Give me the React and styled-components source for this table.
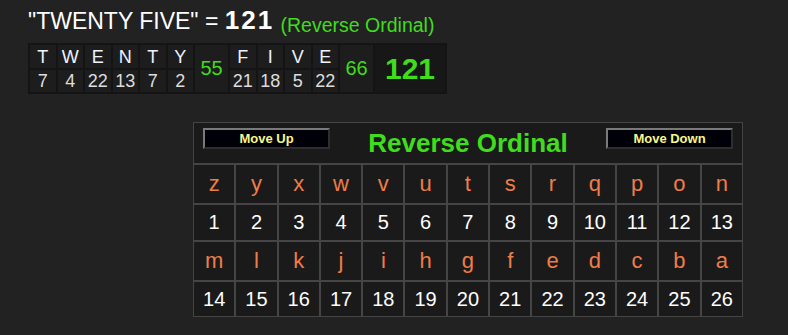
import React from 'react';
import styled, { createGlobalStyle } from 'styled-components';

const GREEN = '#40dc1e';

const GlobalStyle = createGlobalStyle`
  html, body { margin: 0; padding: 0; background: #222222; }
  body { font-family: "Liberation Sans", Arial, Helvetica, sans-serif; }
`;

const Page = styled.div`
  padding: 5px 0 0 28px;
  min-height: 335px;
  box-sizing: border-box;
`;

const Title = styled.div`
  font-size: 23px;
  line-height: 30px;
  color: #ffffff;
  white-space: nowrap;
  margin-bottom: 3px;
`;

const TitleValue = styled.b`
  font-size: 26px;
  letter-spacing: 2px;
`;

const TitleCipher = styled.span`
  color: ${GREEN};
  font-size: 19.5px;
  vertical-align: -3px;
`;

const Breakdown = styled.table`
  border-collapse: separate;
  border-spacing: 2px;
  background: #141414;
  table-layout: fixed;
  width: 419px;
`;

const BreakRow = styled.tr`
  height: ${p => p.$h}px;
`;

const LetterCell = styled.td`
  width: 25.5px;
  padding: 0;
  background: #1d1d1d;
  color: ${p => (p.$num ? '#dddddd' : '#eef4ff')};
  text-align: center;
  font-size: 18px;
  line-height: 1;
`;

const WordTotal = styled.td`
  width: 33px;
  padding: 0;
  background: #1d1d1d;
  color: ${GREEN};
  text-align: center;
  font-size: 20px;
`;

const GrandTotal = styled.td`
  width: 70px;
  padding: 0;
  background: #171717;
  color: ${GREEN};
  text-align: center;
  font-size: 30px;
  font-weight: bold;
`;

const Chart = styled.table`
  margin: 28px 0 0 165px;
  border-collapse: separate;
  border-spacing: 0;
  width: 550px;
  table-layout: fixed;
  background: #1a1a1a;
`;

const ChartRow = styled.tr`
  height: ${p => p.$h}px;
`;

const HeaderCell = styled.td`
  border: 1px solid #454545;
  padding: 5px 9px 0;
  vertical-align: top;
`;

const HeaderBar = styled.div`
  display: flex;
  justify-content: space-between;
  align-items: flex-start;
`;

const MoveButton = styled.button`
  width: 127px;
  height: 21px;
  box-sizing: border-box;
  background: #000008;
  border: 2px solid;
  border-color: #7a7a7a #2e2e2e #2e2e2e #7a7a7a;
  color: #f8f88a;
  font: bold 13px "Liberation Sans", Arial, sans-serif;
  padding: 0;
  line-height: 16px;
  cursor: pointer;
`;

const ChartTitle = styled.div`
  color: ${GREEN};
  font-size: 26px;
  font-weight: bold;
  line-height: 30px;
`;

const Cell = styled.td`
  border: 1px solid #454545;
  text-align: center;
  vertical-align: middle;
  padding: 0;
  color: ${p => (p.$letter ? '#ef7d48' : '#ffffff')};
  font-size: ${p => (p.$letter ? 22 : 20)}px;
`;

const word1 = [['T', 7], ['W', 4], ['E', 22], ['N', 13], ['T', 7], ['Y', 2]];
const word2 = [['F', 21], ['I', 18], ['V', 5], ['E', 22]];

const alphabet = 'zyxwvutsrqponmlkjihgfedcba'.split('');
const rows = [alphabet.slice(0, 13), alphabet.slice(13)];

export default function App() {
  return (
    <>
      <GlobalStyle />
      <Page>
        <Title>
          "TWENTY FIVE" = <TitleValue>121</TitleValue> <TitleCipher>(Reverse Ordinal)</TitleCipher>
        </Title>
        <Breakdown>
          <tbody>
            <BreakRow $h={23}>
              {word1.map(([l], i) => (
                <LetterCell key={'a' + i}>{l}</LetterCell>
              ))}
              <WordTotal rowSpan={2}>55</WordTotal>
              {word2.map(([l], i) => (
                <LetterCell key={'b' + i}>{l}</LetterCell>
              ))}
              <WordTotal rowSpan={2}>66</WordTotal>
              <GrandTotal rowSpan={2}>121</GrandTotal>
            </BreakRow>
            <BreakRow $h={22}>
              {word1.map(([, n], i) => (
                <LetterCell $num key={'c' + i}>{n}</LetterCell>
              ))}
              {word2.map(([, n], i) => (
                <LetterCell $num key={'d' + i}>{n}</LetterCell>
              ))}
            </BreakRow>
          </tbody>
        </Breakdown>

        <Chart>
          <tbody>
            <ChartRow $h={42}>
              <HeaderCell colSpan={13}>
                <HeaderBar>
                  <MoveButton>Move Up</MoveButton>
                  <ChartTitle>Reverse Ordinal</ChartTitle>
                  <MoveButton>Move Down</MoveButton>
                </HeaderBar>
              </HeaderCell>
            </ChartRow>
            {rows.map((r, ri) => (
              <React.Fragment key={ri}>
                <ChartRow $h={40}>
                  {r.map(ch => (
                    <Cell $letter key={ch}>{ch}</Cell>
                  ))}
                </ChartRow>
                <ChartRow $h={ri === 0 ? 37 : 36}>
                  {r.map((ch, i) => (
                    <Cell key={ch}>{ri * 13 + i + 1}</Cell>
                  ))}
                </ChartRow>
              </React.Fragment>
            ))}
          </tbody>
        </Chart>
      </Page>
    </>
  );
}
